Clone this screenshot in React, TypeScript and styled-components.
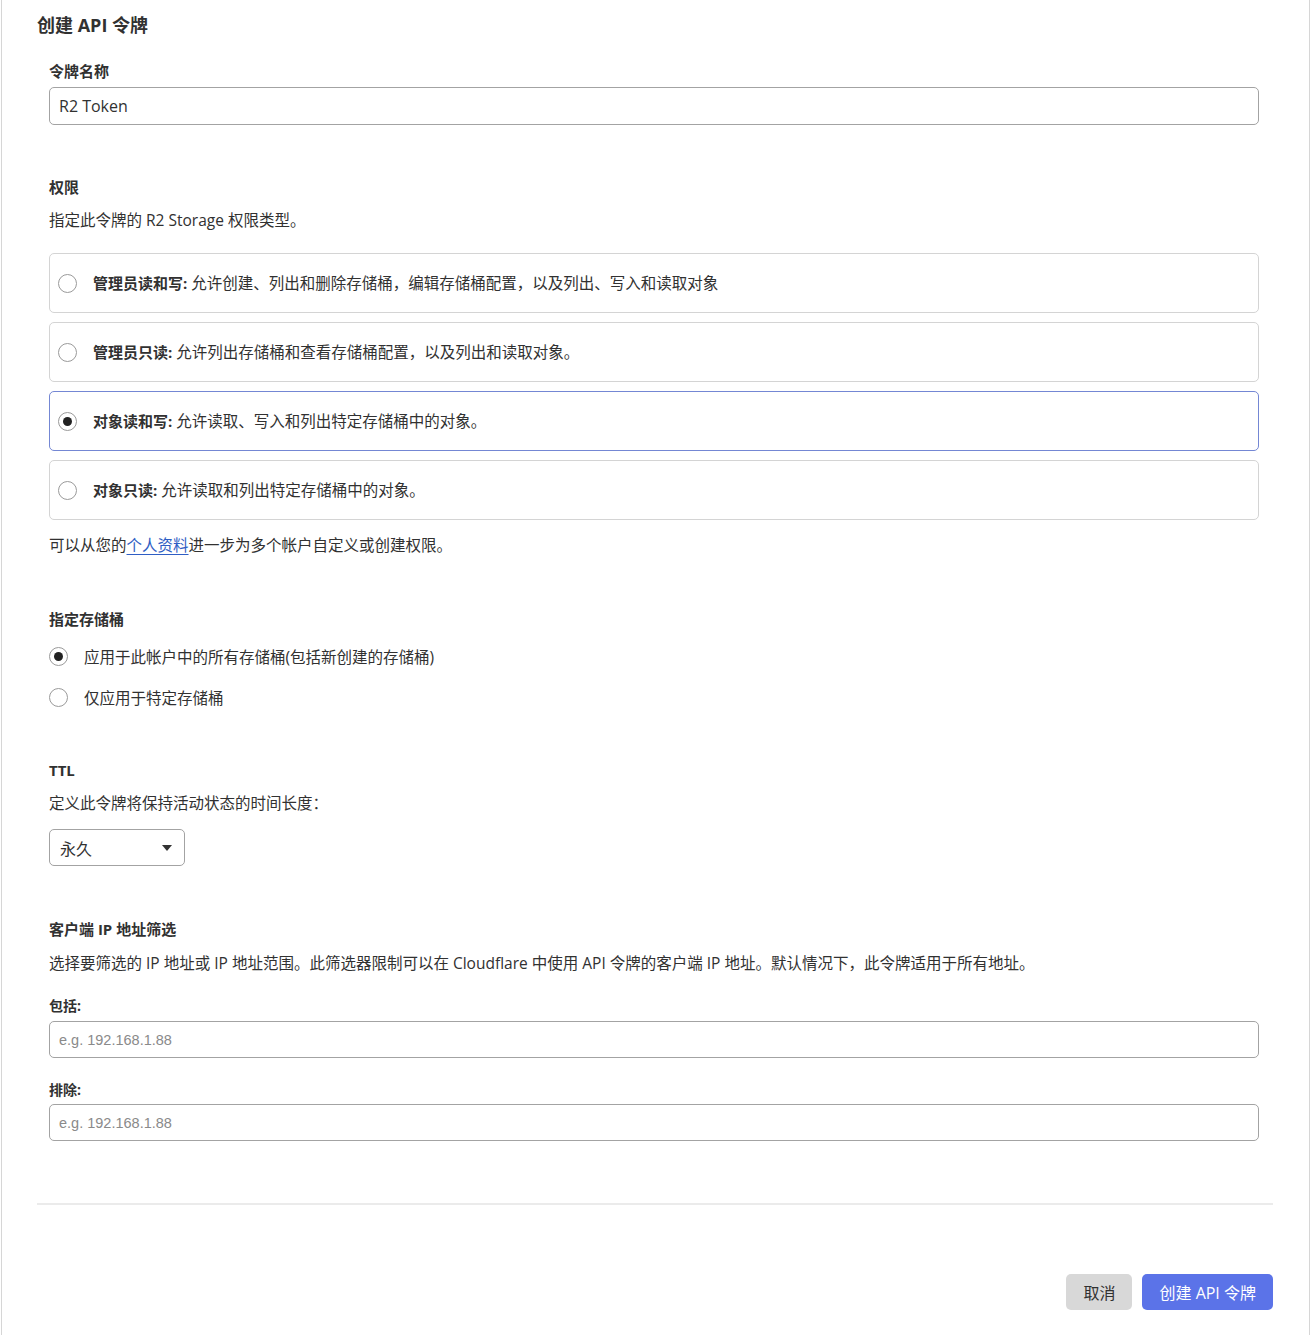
import React, { useState } from "react";
import styled, { createGlobalStyle, css } from "styled-components";

const Global = createGlobalStyle`
  html, body { margin: 0; padding: 0; background: #fff; }
  body { font-family: "Open Sans", "Noto Sans CJK SC", sans-serif; color: #313131; }
  * { box-sizing: border-box; }
`;

const Card = styled.div`
  margin-left: 1px;
  width: 1309px;
  min-height: 1335px;
  border-left: 1px solid #d6d6d6;
  border-right: 1px solid #d6d6d6;
  padding: 12px 36px 24px 35px;
`;

const Title = styled.h2`
  margin: 0;
  font-size: 18px;
  line-height: 26px;
  font-weight: 700;
  color: #313131;
`;

const Form = styled.div`
  padding: 0 14px 0 12px;
  display: flex;
  flex-direction: column;
`;

const Label = styled.div<{ $mt: number; $small?: boolean }>`
  margin-top: ${(p) => p.$mt}px;
  font-size: ${(p) => (p.$small ? 14 : 15)}px;
  line-height: ${(p) => (p.$small ? 20 : 22)}px;
  font-weight: 700;
  color: #313131;
`;

const Desc = styled.div<{ $mt: number }>`
  margin-top: ${(p) => p.$mt}px;
  font-size: 15.5px;
  line-height: 22px;
  color: #313131;
`;

const TextInput = styled.input<{ $mt: number; $h: number; $placeholderStyle?: boolean }>`
  margin-top: ${(p) => p.$mt}px;
  width: 100%;
  height: ${(p) => p.$h}px;
  border: 1px solid #a3a3a3;
  border-radius: 5px;
  padding: 0 9px;
  font-family: "Open Sans", "Noto Sans CJK SC", sans-serif;
  font-size: 16px;
  color: #313131;
  outline: none;
  ${(p) =>
    p.$placeholderStyle &&
    css`
      font-family: "Liberation Sans", Arial, sans-serif;
      font-size: 14.5px;
    `}
  &::placeholder {
    color: #8a8a8a;
  }
`;

const OptionList = styled.div`
  margin-top: 22px;
  display: flex;
  flex-direction: column;
  gap: 9px;
`;

const OptionBox = styled.label<{ $selected: boolean }>`
  height: 60px;
  display: flex;
  align-items: center;
  gap: 16px;
  padding-left: 8px;
  border: 1px solid ${(p) => (p.$selected ? "#7487d4" : "#d4d4d4")};
  border-radius: 5px;
  font-size: 15.5px;
  line-height: 22px;
  cursor: pointer;
`;

const Radio = styled.span<{ $checked: boolean }>`
  flex: none;
  width: 19px;
  height: 19px;
  border-radius: 50%;
  border: 1px solid #9a9a9a;
  background: #fff;
  display: flex;
  align-items: center;
  justify-content: center;
  &::after {
    content: "";
    width: 9px;
    height: 9px;
    border-radius: 50%;
    background: ${(p) => (p.$checked ? "#222" : "transparent")};
  }
`;

const Strong = styled.b`
  font-weight: 700;
  font-size: 15px;
`;

const Link = styled.a`
  color: #2f5ec4;
  text-decoration: underline;
  text-underline-offset: 3px;
`;

const RadioGroup = styled.div`
  margin-top: 14px;
  display: flex;
  flex-direction: column;
  gap: 17px;
`;

const RadioRow = styled.label`
  height: 24px;
  display: flex;
  align-items: center;
  gap: 16px;
  font-size: 15.5px;
  cursor: pointer;
`;

const Select = styled.div`
  margin-top: 15px;
  width: 136px;
  height: 37px;
  border: 1px solid #a3a3a3;
  border-radius: 5px;
  display: flex;
  align-items: center;
  justify-content: space-between;
  padding: 0 12px 0 10px;
  font-size: 16px;
`;

const Caret = styled.span`
  width: 0;
  height: 0;
  border-left: 5px solid transparent;
  border-right: 5px solid transparent;
  border-top: 6px solid #333;
`;

const Divider = styled.hr`
  margin: 62px 0 0;
  border: none;
  border-top: 2px solid #ebebeb;
`;

const Footer = styled.div`
  margin-top: 69px;
  display: flex;
  justify-content: flex-end;
  gap: 10px;
`;

const Button = styled.button<{ $primary?: boolean }>`
  height: 36px;
  padding: 0 17px;
  border: none;
  border-radius: 5px;
  font-family: "Open Sans", "Noto Sans CJK SC", sans-serif;
  font-size: 16px;
  cursor: pointer;
  background: ${(p) => (p.$primary ? "#5b73e8" : "#d8d8d8")};
  color: ${(p) => (p.$primary ? "#fff" : "#313131")};
`;

const options = [
  { title: "管理员读和写:", text: "允许创建、列出和删除存储桶，编辑存储桶配置，以及列出、写入和读取对象" },
  { title: "管理员只读:", text: "允许列出存储桶和查看存储桶配置，以及列出和读取对象。" },
  { title: "对象读和写:", text: "允许读取、写入和列出特定存储桶中的对象。" },
  { title: "对象只读:", text: "允许读取和列出特定存储桶中的对象。" },
];

export default function App() {
  const [perm, setPerm] = useState(2);
  const [bucket, setBucket] = useState(0);
  return (
    <>
      <Global />
      <Card>
        <Title>创建 API 令牌</Title>
        <Form>
          <Label $mt={22}>令牌名称</Label>
          <TextInput $mt={5} $h={38} defaultValue="R2 Token" />

          <Label $mt={51}>权限</Label>
          <Desc $mt={11}>指定此令牌的 R2 Storage 权限类型。</Desc>
          <OptionList>
            {options.map((o, i) => (
              <OptionBox key={i} $selected={perm === i} onClick={() => setPerm(i)}>
                <Radio $checked={perm === i} />
                <span>
                  <Strong>{o.title}</Strong> {o.text}
                </span>
              </OptionBox>
            ))}
          </OptionList>
          <Desc $mt={14}>
            可以从您的<Link href="#">个人资料</Link>进一步为多个帐户自定义或创建权限。
          </Desc>

          <Label $mt={52}>指定存储桶</Label>
          <RadioGroup>
            <RadioRow onClick={() => setBucket(0)}>
              <Radio $checked={bucket === 0} />
              应用于此帐户中的所有存储桶(包括新创建的存储桶)
            </RadioRow>
            <RadioRow onClick={() => setBucket(1)}>
              <Radio $checked={bucket === 1} />
              仅应用于特定存储桶
            </RadioRow>
          </RadioGroup>

          <Label $mt={50}>TTL</Label>
          <Desc $mt={11}>定义此令牌将保持活动状态的时间长度：</Desc>
          <Select>
            <span>永久</span>
            <Caret />
          </Select>

          <Label $mt={52}>客户端 IP 地址筛选</Label>
          <Desc $mt={12}>
            选择要筛选的 IP 地址或 IP 地址范围。此筛选器限制可以在 Cloudflare 中使用 API 令牌的客户端 IP 地址。默认情况下，此令牌适用于所有地址。
          </Desc>
          <Label $mt={22} $small>包括:</Label>
          <TextInput $mt={5} $h={37} $placeholderStyle placeholder="e.g. 192.168.1.88" />
          <Label $mt={22} $small>排除:</Label>
          <TextInput $mt={4} $h={37} $placeholderStyle placeholder="e.g. 192.168.1.88" />
        </Form>
        <Divider />
        <Footer>
          <Button>取消</Button>
          <Button $primary>创建 API 令牌</Button>
        </Footer>
      </Card>
    </>
  );
}
